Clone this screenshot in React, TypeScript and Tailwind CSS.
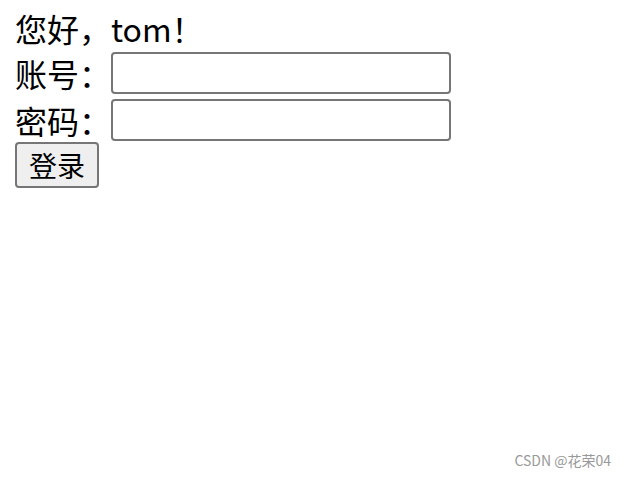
import { useState } from "react";

const App = () => {
  const [user, setUser] = useState("");
  const [pwd, setPwd] = useState("");

  return (
    <div
      className="relative h-[478px] w-[625px] bg-white text-black"
      style={{ fontFamily: '"Noto Sans CJK SC", "Noto Sans", sans-serif' }}
    >
      <div className="px-[15px] pt-[7px] text-[32px] leading-none">
        <div className="flex h-[42px] items-center">您好，tom！</div>
        <div className="mt-[3px] flex h-[42px] items-center">
          <span className="w-[96px]">账号：</span>
          <input
            value={user}
            onChange={(e) => setUser(e.target.value)}
            className="h-[42px] w-[340px] rounded-[4px] border-2 border-[#767676] bg-white px-2 text-[20px] outline-none"
          />
        </div>
        <div className="mt-[5px] flex h-[42px] items-center">
          <span className="w-[96px]">密码：</span>
          <input
            type="password"
            value={pwd}
            onChange={(e) => setPwd(e.target.value)}
            className="h-[42px] w-[340px] rounded-[4px] border-2 border-[#767676] bg-white px-2 text-[20px] outline-none"
          />
        </div>
        <button className="mt-[1px] flex h-[46px] w-[84px] items-center justify-center rounded-[4px] border-2 border-[#767676] bg-[#efefef] text-[28px]">
          登录
        </button>
      </div>
      <div className="absolute bottom-[7px] right-[14px] text-[14px] text-[#999]">
        CSDN @花荣04
      </div>
    </div>
  );
};

export default App;
